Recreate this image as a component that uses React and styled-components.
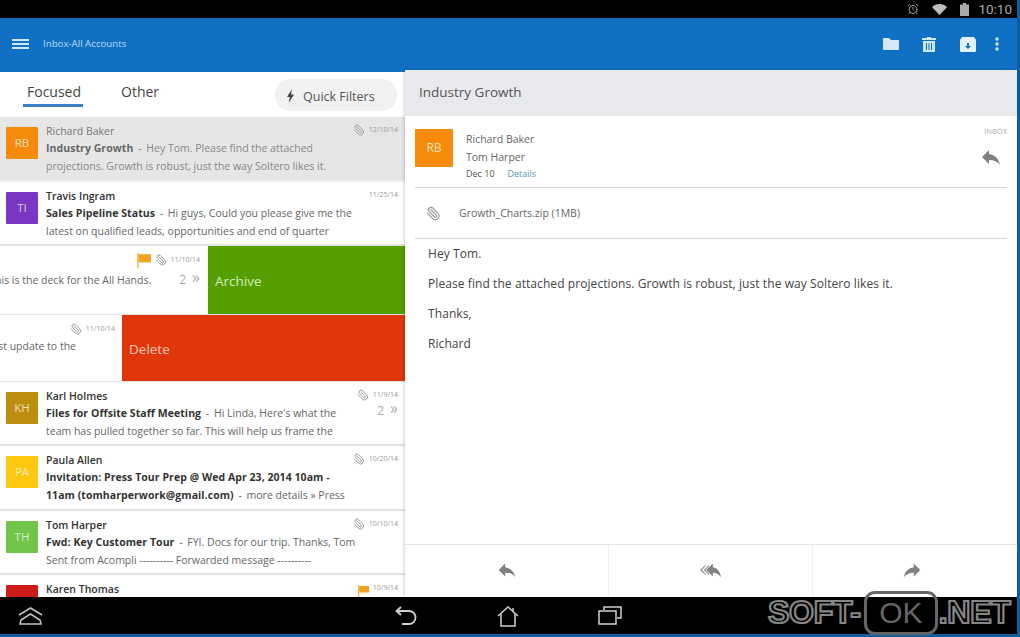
import React from 'react';
import styled, { createGlobalStyle } from 'styled-components';
import { AlarmClock, Paperclip } from 'lucide-react';

const Global = createGlobalStyle`
  html, body {
    margin: 0;
    padding: 0;
    background: #0f6cb8;
  }
  * {
    box-sizing: border-box;
  }
`;

const Screen = styled.div`
  width: 1020px;
  height: 637px;
  padding: 0 3px 3px 0;
  background: #0f5f9f;
  overflow: hidden;
  display: flex;
  flex-direction: column;
  font-family: 'Open Sans', 'Liberation Sans', sans-serif;
  position: relative;
`;

const StatusBar = styled.div`
  height: 18px;
  flex-shrink: 0;
  background: #000;
  color: #a9a9a9;
  display: flex;
  align-items: center;
  justify-content: flex-end;
  padding-right: 5px;
`;

const StatusTime = styled.span`
  font-size: 13.5px;
  margin-left: 9px;
  font-family: 'Roboto', sans-serif;
`;

const StatusIcon = styled.span`
  display: flex;
  margin-left: ${(p) => p.$gap || 0}px;
`;

const AppBar = styled.div`
  height: 54px;
  flex-shrink: 0;
  background: #1071c4;
  display: flex;
  align-items: flex-start;
  padding: 20px 0 0 12px;
`;

const Burger = styled.div`
  width: 17px;
  height: 10px;
  margin-top: 1px;
  border-top: 2px solid #cfe6f7;
  border-bottom: 2px solid #cfe6f7;
  position: relative;
  &::after {
    content: '';
    position: absolute;
    left: 0;
    right: 0;
    top: 2px;
    height: 2px;
    background: #cfe6f7;
  }
`;

const AppTitle = styled.div`
  margin-left: 14px;
  font-size: 9.7px;
  line-height: 12px;
  color: #bcdcf5;
`;

const AppActions = styled.div`
  margin-left: auto;
  display: flex;
  align-items: center;
  height: 14px;
  margin-top: -1px;
  padding-right: 18px;
`;

const ActionIcon = styled.span`
  display: flex;
  margin-left: ${(p) => p.$gap}px;
`;

const Body = styled.div`
  flex: 1;
  min-height: 0;
  display: flex;
  background: #fff;
`;

const ListPane = styled.div`
  width: 405px;
  flex-shrink: 0;
  overflow: hidden;
  background: #fff;
`;

const TabBar = styled.div`
  height: 45px;
  display: flex;
  position: relative;
  padding-left: 23px;
`;

const Tab = styled.div`
  width: ${(p) => p.$width}px;
  margin-right: ${(p) => p.$after}px;
  height: 35px;
  padding: 11px 0 0 ${(p) => p.$pad}px;
  font-size: 14px;
  line-height: 18px;
  color: #444;
  border-bottom: 3px solid ${(p) => (p.$active ? '#3d7fc6' : 'transparent')};
`;

const FilterPill = styled.div`
  position: absolute;
  left: 275px;
  top: 7px;
  width: 122px;
  height: 32px;
  border-radius: 16px;
  background: #f1f1f1;
  display: flex;
  align-items: center;
  padding: 2px 0 0 11px;
  font-size: 12.5px;
  color: #555;
  gap: 8px;
`;

const Row = styled.div`
  height: ${(p) => p.$height}px;
  display: flex;
  padding: 6px 7px 0 6px;
  background: ${(p) => (p.$selected ? '#e6e6e6' : '#fff')};
  border-bottom: 2px solid ${(p) => (p.$selected ? '#eeeeee' : '#e3e3e3')};
`;

const Avatar = styled.div`
  width: ${(p) => p.$size}px;
  height: ${(p) => p.$size}px;
  flex-shrink: 0;
  margin-top: ${(p) => p.$top}px;
  background: ${(p) => p.$color};
  color: rgba(255, 255, 255, 0.72);
  border-radius: 1px;
  display: flex;
  align-items: center;
  justify-content: center;
  font-size: ${(p) => (p.$size > 32 ? 12 : 11.5)}px;
  padding-bottom: 2px;
`;

const Main = styled.div`
  flex: 1;
  min-width: 0;
  margin-left: 8px;
  white-space: nowrap;
  font-size: 10.5px;
  line-height: 17.4px;
  color: ${(p) => (p.$muted ? '#888' : '#666')};
`;

const Name = styled.div`
  font-size: 10.5px;
  font-weight: ${(p) => (p.$muted ? 400 : 600)};
  color: ${(p) => (p.$muted ? '#777' : '#333')};
`;

const Subject = styled.span`
  font-weight: 700;
  letter-spacing: 0.06px;
  color: ${(p) => (p.$muted ? '#666' : '#333')};
`;

const Dash = styled.span`
  margin: 0 2px;
`;

const Side = styled.div`
  flex-shrink: 0;
  display: flex;
  flex-direction: column;
  align-items: flex-end;
`;

const Meta = styled.div`
  display: flex;
  align-items: center;
  font-size: 7px;
  line-height: 12px;
  color: #999;
  height: 13px;
  gap: 4px;
`;

const Count = styled.div`
  display: flex;
  align-items: flex-start;
  font-size: 12px;
  line-height: 16px;
  color: #aaa;
  margin-top: 2px;
  gap: 6px;
  & > b {
    font-weight: 400;
    font-size: 16px;
    line-height: 11px;
  }
`;

const Clip = styled(Paperclip)`
  width: ${(p) => p.size}px;
  height: ${(p) => p.size}px;
  color: #9c9c9c;
  transform: scaleX(-1);
`;

const SwipeRow = styled.div`
  height: ${(p) => p.$height}px;
  display: flex;
  border-bottom: 1px solid #e3e3e3;
`;

const SwipeContent = styled.div`
  flex: 1;
  min-width: 0;
  overflow: hidden;
  display: flex;
  flex-direction: column;
  align-items: flex-end;
  padding: 7px ${(p) => p.$edge}px 0 0;
  white-space: nowrap;
  font-size: 10.5px;
  color: #666;
`;

const SwipeLine = styled.div`
  display: flex;
  justify-content: flex-end;
  margin-top: ${(p) => p.$top}px;
  line-height: 17px;
  padding-right: ${(p) => p.$right || 0}px;
`;

const SwipeCount = styled(Count)`
  margin: 0 0 0 28px;
`;

const SwipeAction = styled.div`
  width: ${(p) => p.$width}px;
  flex-shrink: 0;
  background: ${(p) => p.$color};
  color: ${(p) => p.$text};
  font-size: 13.5px;
  display: flex;
  align-items: center;
  padding: 2px 0 0 7px;
`;

const FlagMark = styled.span`
  display: flex;
  margin-top: ${(p) => p.$drop || 0}px;
`;

const DetailPane = styled.div`
  flex: 1;
  min-width: 0;
  margin-top: -2px;
  display: flex;
  flex-direction: column;
  background: #fff;
  box-shadow: -1px 0 3px rgba(0, 0, 0, 0.18);
  position: relative;
`;

const DetailTitle = styled.div`
  height: 46px;
  flex-shrink: 0;
  background: #e8e9ed;
  padding: 12px 0 0 14px;
  font-size: 13.5px;
  line-height: 20px;
  color: #555;
`;

const Sender = styled.div`
  height: 72px;
  flex-shrink: 0;
  margin: 0 10px;
  display: flex;
  padding-top: 10px;
  border-bottom: 1px solid #d8d8d8;
`;

const SenderText = styled.div`
  margin-left: 13px;
  font-size: 10.5px;
  color: #666;
  line-height: 18px;
  margin-top: 4px;
`;

const SenderDate = styled.div`
  font-size: 9px;
  line-height: 14px;
  margin-top: 1px;
  color: #555;
  & > a {
    color: #5b93b5;
    margin-left: 13px;
  }
`;

const SenderSide = styled.div`
  margin-left: auto;
  display: flex;
  flex-direction: column;
  align-items: flex-end;
`;

const InboxTag = styled.div`
  font-size: 7.5px;
  line-height: 10px;
  color: #aaa;
`;

const ReplyIcon = styled.span`
  display: flex;
  margin: 9px 4px 0 0;
`;

const Attachment = styled.div`
  height: 51px;
  flex-shrink: 0;
  margin: 0 10px;
  padding-left: 11px;
  display: flex;
  align-items: center;
  font-size: 10.5px;
  color: #666;
  gap: 18px;
  border-bottom: 1px solid #d8d8d8;
`;

const Message = styled.div`
  flex: 1;
  padding: 0 0 0 23px;
  font-size: 12px;
  letter-spacing: 0.08px;
  line-height: 30px;
  color: #444;
`;

const DetailFooter = styled.div`
  height: 53px;
  flex-shrink: 0;
  display: grid;
  grid-template-columns: 203px 204px 1fr;
  border-top: 1px solid #e3e3e3;
`;

const FooterCell = styled.div`
  display: flex;
  align-items: center;
  justify-content: center;
  padding: 0 ${(p) => p.$shift || 0}px 2px 0;
  border-left: ${(p) => (p.$first ? 'none' : '1px solid #eeeeee')};
`;

const NavBar = styled.div`
  height: 37px;
  flex-shrink: 0;
  background: #000;
  position: relative;
  display: flex;
  align-items: center;
  color: #c9c9c9;
`;

const NavIcon = styled.span`
  display: flex;
  margin-left: ${(p) => p.$gap}px;
`;

const Watermark = styled.div`
  position: absolute;
  left: 768px;
  top: -7px;
  height: 45px;
  display: flex;
  align-items: center;
  font-family: 'Liberation Sans', sans-serif;
  font-weight: 700;
  font-size: 32px;
  color: #000;
  -webkit-text-stroke: 2.2px #858585;
  letter-spacing: -0.3px;
`;

const WatermarkBox = styled.span`
  width: 74px;
  height: 44px;
  margin: 0 1px 0 3px;
  border: 3px solid #666;
  border-radius: 11px;
  display: flex;
  align-items: center;
  justify-content: center;
  font-weight: 400;
  font-size: 30px;
  color: #666;
  -webkit-text-stroke: 0;
`;

const Flag = ({ size = 12 }) => (
  <svg width={size} height={size} viewBox="0 0 12 12">
    <path d="M1 0h1.200v12H1z" fill="#f2b84b" />
    <path d="M2.200 1H12v6.500H2.200z" fill="#eea21f" />
  </svg>
);

const Reply = ({ size = 22, color = '#808080' }) => (
  <svg width={size} height={size} viewBox="0 0 24 24">
    <path fill={color} d="M10 9V5l-7 7 7 7v-4.100c5 0 8.500 1.600 11 5.100-1-5-4-10-11-11z" />
  </svg>
);

const ReplyAll = () => (
  <svg width="26" height="22" viewBox="0 0 26 24">
    <path fill="#8a8a8a" d="M7 8V6.500L1 12l6 5.500V16l-4-4zM11 8V6.500L5 12l6 5.500V16l-4-4z" />
    <path fill="#808080" d="M15 9V5l-7 7 7 7v-4.100c4 0 6.500 1.600 9 5.100-1-5-3-10-9-11z" />
  </svg>
);

const Forward = () => (
  <svg width="22" height="22" viewBox="0 0 24 24">
    <path fill="#808080" d="M14 9V5l7 7-7 7v-4.100c-5 0-8.500 1.600-11 5.100 1-5 4-10 11-11z" />
  </svg>
);

const Wifi = () => (
  <svg width="15" height="11" viewBox="0 0 15 11">
    <path fill="#bdbdbd" d="M7.500 11 0 3.200C2 1.200 4.600 0 7.500 0S13 1.200 15 3.200z" />
  </svg>
);

const Battery = () => (
  <svg width="9" height="13" viewBox="0 0 9 13">
    <path fill="#a9a9a9" d="M3 0h3v1.500h3V13H0V1.500h3z" />
  </svg>
);

const Folder = () => (
  <svg width="16" height="12" viewBox="0 0 16 12">
    <path fill="#d3e9f8" d="M1 0h5l2 2h7a1 1 0 0 1 1 1v8a1 1 0 0 1-1 1H1a1 1 0 0 1-1-1V1a1 1 0 0 1 1-1z" />
  </svg>
);

const Trash = () => (
  <svg width="14" height="15" viewBox="0 0 14 15">
    <path fill="#cfe6f7" d="M5 0h4v1h5v2H0V1h5zM1 4h12v11H1zM4 6v7h1V6zm2.500 0v7h1V6zM9 6v7h1V6z" fillRule="evenodd" />
  </svg>
);

const ArchiveBox = () => (
  <svg width="16" height="15" viewBox="0 0 16 15">
    <path
      fill="#e4f1fb"
      fillRule="evenodd"
      d="M2 0h12l2 3v11a1 1 0 0 1-1 1H1a1 1 0 0 1-1-1V3zM7 6v3H5l3 3 3-3H9V6z"
    />
  </svg>
);

const Dots = () => (
  <svg width="4" height="14" viewBox="0 0 4 14">
    <g fill="#cfe6f7">
      <circle cx="2" cy="2" r="1.700" />
      <circle cx="2" cy="7" r="1.700" />
      <circle cx="2" cy="12" r="1.700" />
    </g>
  </svg>
);

const Bolt = () => (
  <svg width="9" height="14" viewBox="0 0 9 14">
    <path fill="#444" d="M6 0 1 8h3l-1.500 6L8 5.500H5z" />
  </svg>
);

const NavUp = () => (
  <svg width="25" height="18" viewBox="0 0 25 18" fill="none" stroke="#c4c4c4" strokeWidth="1.500">
    <path d="M1 8 12.500 1 24 8" />
    <path d="M3 13 12.500 7 22 13l1 4H2z" />
  </svg>
);

const NavBack = () => (
  <svg width="22" height="20" viewBox="0 0 22 20" fill="none" stroke="#d0d0d0" strokeWidth="1.800">
    <path d="M6 1 1.500 5 6 9" />
    <path d="M2 5h12a5.500 5.500 0 0 1 0 13H7" />
  </svg>
);

const NavHome = () => (
  <svg width="22" height="22" viewBox="0 0 22 22" fill="none" stroke="#d0d0d0" strokeWidth="1.500">
    <path d="M1 11 11 2l10 9" />
    <path d="M4 9v12h14V9" />
    <path d="M16 3v3" />
  </svg>
);

const NavRecent = () => (
  <svg width="24" height="19" viewBox="0 0 24 19" fill="none" stroke="#d0d0d0" strokeWidth="1.500">
    <path d="M6 4V1h17v11h-4" />
    <path d="M1 5h17v13H1z" />
  </svg>
);

const rowsBefore = [
  {
    initials: 'RB',
    color: '#f58a0b',
    name: 'Richard Baker',
    subject: 'Industry Growth',
    first: 'Hey Tom. Please find the attached',
    second: 'projections. Growth is robust, just the way Soltero likes it.',
    date: '12/10/14',
    clip: true,
    selected: true,
    height: 65,
  },
  {
    initials: 'TI',
    color: '#7b36c4',
    name: 'Travis Ingram',
    subject: 'Sales Pipeline Status',
    first: 'Hi guys, Could you please give me the',
    second: 'latest on qualified leads, opportunities and end of quarter',
    date: '11/25/14',
    height: 64,
  },
];

const rowsAfter = [
  {
    initials: 'KH',
    color: '#bd8e0e',
    name: 'Karl Holmes',
    subject: 'Files for Offsite Staff Meeting',
    first: "Hi Linda, Here's what the",
    second: 'team has pulled together so far. This will help us frame the',
    date: '11/9/14',
    clip: true,
    count: 2,
    height: 64,
  },
  {
    initials: 'PA',
    color: '#fdc80f',
    name: 'Paula Allen',
    subject: 'Invitation: Press Tour Prep @ Wed Apr 23, 2014 10am -',
    secondBold: '11am (tomharperwork@gmail.com)',
    second: 'more details » Press',
    date: '10/20/14',
    clip: true,
    height: 65,
  },
  {
    initials: 'TH',
    color: '#72c54b',
    name: 'Tom Harper',
    subject: 'Fwd: Key Customer Tour',
    first: 'FYI. Docs for our trip. Thanks, Tom',
    second: 'Sent from Acompli ---------- Forwarded message ----------',
    date: '10/10/14',
    clip: true,
    height: 64,
  },
  {
    initials: '',
    color: '#cf1a1a',
    name: 'Karen Thomas',
    date: '10/9/14',
    flag: true,
    height: 64,
  },
];

const MailRow = ({ mail }) => (
  <Row $height={mail.height} $selected={mail.selected}>
    <Avatar $size={32} $top={4} $color={mail.color}>{mail.initials}</Avatar>
    <Main $muted={mail.selected}>
      <Name $muted={mail.selected}>{mail.name}</Name>
      <div>
        <Subject $muted={mail.selected}>{mail.subject}</Subject>
        {mail.first && <> <Dash>-</Dash> {mail.first}</>}
      </div>
      <div>
        {mail.secondBold ? (
          <>
            <Subject>{mail.secondBold}</Subject> <Dash>-</Dash> {mail.second}
          </>
        ) : (
          mail.second
        )}
      </div>
    </Main>
    <Side>
      <Meta>
        {mail.clip && <Clip size={12} />}
        {mail.flag && <FlagMark $drop={6}><Flag /></FlagMark>}
        {mail.date}
      </Meta>
      {mail.count && (
        <Count>
          {mail.count}
          <b>»</b>
        </Count>
      )}
    </Side>
  </Row>
);

export default function App() {
  return (
    <Screen>
      <Global />
      <StatusBar>
        <StatusIcon><AlarmClock size={12} color="#a0a0a0" /></StatusIcon>
        <StatusIcon $gap={13}><Wifi /></StatusIcon>
        <StatusIcon $gap={13}><Battery /></StatusIcon>
        <StatusTime>10:10</StatusTime>
      </StatusBar>
      <AppBar>
        <Burger />
        <AppTitle>Inbox-All Accounts</AppTitle>
        <AppActions>
          <ActionIcon $gap={0}><Folder /></ActionIcon>
          <ActionIcon $gap={23}><Trash /></ActionIcon>
          <ActionIcon $gap={24}><ArchiveBox /></ActionIcon>
          <ActionIcon $gap={19}><Dots /></ActionIcon>
        </AppActions>
      </AppBar>
      <Body>
        <ListPane>
          <TabBar>
            <Tab $active $width={60} $after={38} $pad={4}>Focused</Tab>
            <Tab $width={50} $after={0} $pad={0}>Other</Tab>
            <FilterPill><Bolt />Quick Filters</FilterPill>
          </TabBar>
          {rowsBefore.map((mail) => <MailRow key={mail.name} mail={mail} />)}
          <SwipeRow $height={69}>
            <SwipeContent $edge={8}>
              <Meta>
                <FlagMark $drop={2}><Flag size={15} /></FlagMark>
                <Clip size={12} />
                11/10/14
              </Meta>
              <SwipeLine $top={6}>
                Hi all, this is the deck for the All Hands.
                <SwipeCount>2<b>»</b></SwipeCount>
              </SwipeLine>
            </SwipeContent>
            <SwipeAction $width={197} $color="#55a000" $text="#d5ecc0">Archive</SwipeAction>
          </SwipeRow>
          <SwipeRow $height={67}>
            <SwipeContent $edge={7}>
              <Meta>
                <Clip size={12} />
                <span>11/10/14</span>
              </Meta>
              <SwipeLine $top={3} $right={39}>Here is the latest update to the</SwipeLine>
            </SwipeContent>
            <SwipeAction $width={283} $color="#e0360a" $text="#f7c7b4">Delete</SwipeAction>
          </SwipeRow>
          {rowsAfter.map((mail) => <MailRow key={mail.name} mail={mail} />)}
        </ListPane>
        <DetailPane>
          <DetailTitle>Industry Growth</DetailTitle>
          <Sender>
            <Avatar $size={38} $top={3} $color="#f58a0b">RB</Avatar>
            <SenderText>
              <div>Richard Baker</div>
              <div>Tom Harper</div>
              <SenderDate>Dec 10<a>Details</a></SenderDate>
            </SenderText>
            <SenderSide>
              <InboxTag>INBOX</InboxTag>
              <ReplyIcon><Reply size={24} /></ReplyIcon>
            </SenderSide>
          </Sender>
          <Attachment>
            <Clip size={15} />
            Growth_Charts.zip (1MB)
          </Attachment>
          <Message>
            <div>Hey Tom.</div>
            <div>Please find the attached projections. Growth is robust, just the way Soltero likes it.</div>
            <div>Thanks,</div>
            <div>Richard</div>
          </Message>
          <DetailFooter>
            <FooterCell $first><Reply /></FooterCell>
            <FooterCell><ReplyAll /></FooterCell>
            <FooterCell $shift={6}><Forward /></FooterCell>
          </DetailFooter>
        </DetailPane>
      </Body>
      <NavBar>
        <NavIcon $gap={18}><NavUp /></NavIcon>
        <NavIcon $gap={352}><NavBack /></NavIcon>
        <NavIcon $gap={80}><NavHome /></NavIcon>
        <NavIcon $gap={79}><NavRecent /></NavIcon>
        <Watermark>
          SOFT-<WatermarkBox>OK</WatermarkBox>.NET
        </Watermark>
      </NavBar>
    </Screen>
  );
}
